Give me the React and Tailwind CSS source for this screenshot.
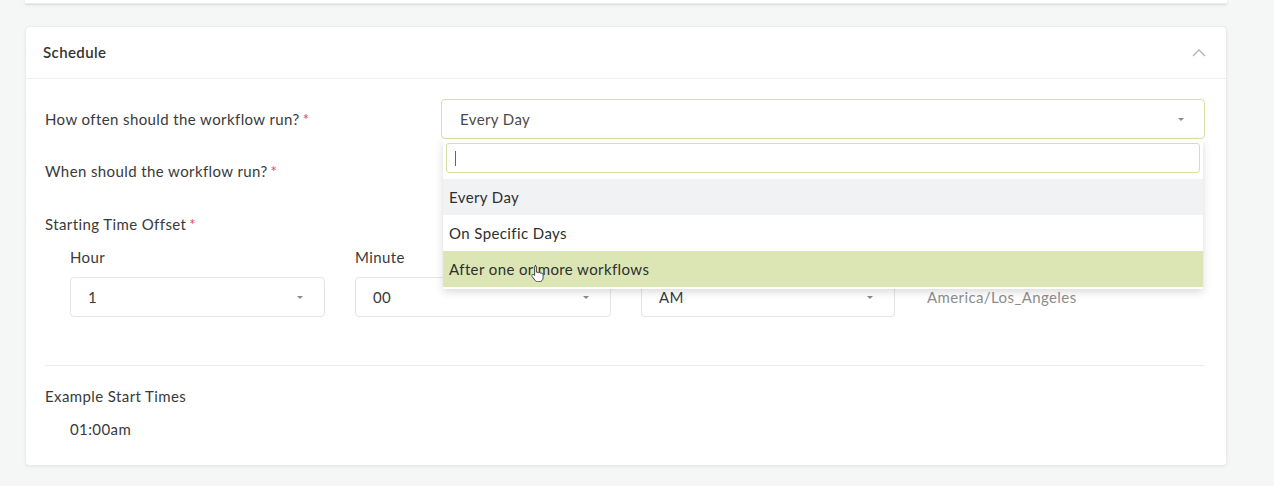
import React from 'react';

const Caret = () => (
    <svg width="8" height="5" viewBox="0 0 8 5" className="text-[#8a8a8a]">
        <path d="M1 1h6L4 4z" fill="currentColor" />
    </svg>
);

const Required = () => <span className="text-[#e5484d] ml-[3px]">*</span>;

const SmallSelect = ({ value, width }) => (
    <div className={`h-[40px] ${width} border border-[#e4e4e4] rounded-[4px] bg-white flex items-center justify-between pl-[17px] pr-[20px] text-[#3a3a3a]`}>
        <span>{value}</span>
        <Caret />
    </div>
);

const options = [
    { label: 'Every Day', cls: 'bg-[#f1f2f3]' },
    { label: 'On Specific Days', cls: 'bg-white' },
    { label: 'After one or more workflows', cls: 'bg-[#dbe6b4]' },
];

export default function App() {
    return (
        <div className="h-[486px] w-[1274px] bg-[#f5f6f6] overflow-hidden text-[15px] tracking-[0.4px] text-[#3a3a3a]" style={{ fontFamily: 'Lato, "Open Sans", sans-serif' }}>
            <div className="ml-[25px] w-[1202px] h-[4px] bg-white border-b border-[#ebebeb] shadow-sm" />
            <div className="ml-[25px] mt-[22px] w-[1202px] bg-white border border-[#ebebeb] rounded-[4px] shadow-[0_1px_3px_rgba(0,0,0,0.06)]">
                <div className="h-[52px] flex items-center justify-between pl-[17px] pr-[20px] border-b border-[#efefef]">
                    <span className="font-semibold text-[15px] text-[#333]">Schedule</span>
                    <svg width="14" height="8" viewBox="0 0 14 8" fill="none" stroke="#b5b5b5" strokeWidth="1.4">
                        <path d="M1 7l6-6 6 6" />
                    </svg>
                </div>
                <div className="pl-[19px] pr-[21px] pt-[20px] pb-[26px]">
                    <div className="flex items-center h-[40px]">
                        <div className="w-[396px]">
                            How often should the workflow run?<Required />
                        </div>
                        <div className="relative flex-1">
                            <div className="h-[40px] border border-[#d3e3a6] rounded-[4px] bg-white flex items-center justify-between pl-[18px] pr-[19px] text-[#4a4a4a]">
                                <span>Every Day</span>
                                <Caret />
                            </div>
                            <div className="absolute left-[2px] right-[2px] top-[40px] z-10 bg-white shadow-[0_3px_8px_rgba(0,0,0,0.15)] pt-[4px] pb-[2px]">
                                <div className="mx-[3px] h-[30px] border border-[#d3e3a6] rounded-[3px] flex items-center pl-[8px]">
                                    <span className="w-px h-[15px] bg-[#666]" />
                                </div>
                                <div className="mt-[6px]">
                                    {options.map((o) => (
                                        <div key={o.label} className={`h-[36px] flex items-center pl-[6px] text-[#2e2e2e] ${o.cls}`}>
                                            {o.label}
                                        </div>
                                    ))}
                                </div>
                                <svg className="absolute left-[88px] top-[125px]" width="14" height="18" viewBox="0 0 14 18">
                                    <path d="M4 1.5c.8 0 1.4.6 1.4 1.4v5.3l.6-.1c.7 0 1.2.3 1.4.8.3-.3.7-.4 1.1-.4.6 0 1.1.4 1.3.9.2-.2.6-.3.9-.3.8 0 1.4.6 1.4 1.4v3.2c0 2.3-1.8 4.1-4.1 4.1H7.1c-1.3 0-2.4-.6-3.2-1.6L1 12.4c-.4-.6-.3-1.4.3-1.8.5-.4 1.3-.3 1.7.2l.6.7V2.9c0-.8.6-1.4 1.4-1.4z" fill="#fff" stroke="#333" strokeWidth="0.9" />
                                </svg>
                            </div>
                        </div>
                    </div>
                    <div className="flex items-center h-[40px] mt-[12px]">
                        When should the workflow run?<Required />
                    </div>
                    <div className="mt-[23px] leading-[20px]">
                        Starting Time Offset<Required />
                    </div>
                    <div className="pl-[25px] mt-[13px]">
                        <div className="flex gap-[30px] leading-[20px]">
                            <span className="w-[255px]">Hour</span>
                            <span className="w-[256px]">Minute</span>
                            <span className="w-[254px]">AM/PM</span>
                        </div>
                        <div className="flex items-center gap-[30px] mt-[10px]">
                            <SmallSelect value="1" width="w-[255px]" />
                            <SmallSelect value="00" width="w-[256px]" />
                            <SmallSelect value="AM" width="w-[254px]" />
                            <span className="pl-[2px] text-[#8d8d8d]">America/Los_Angeles</span>
                        </div>
                    </div>
                    <div className="mt-[48px] border-t border-[#ececec]" />
                    <div className="mt-[20px] leading-[20px]">Example Start Times</div>
                    <div className="pl-[25px] mt-[13px] leading-[20px]">01:00am</div>
                </div>
            </div>
        </div>
    );
}
